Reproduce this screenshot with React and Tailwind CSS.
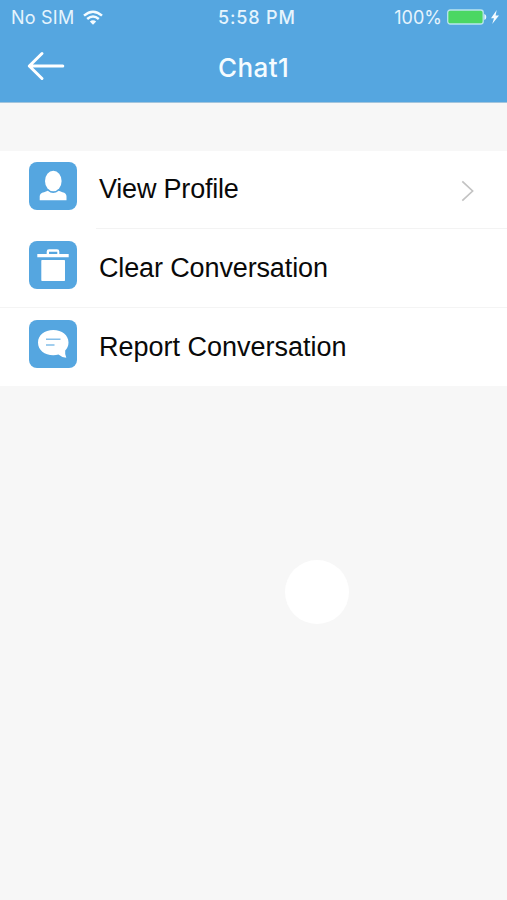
function WifiIcon() {
  return (
    <svg className="-mt-px ml-[9px] h-[16px] w-[20px]" viewBox="0 0 20 16" fill="none" stroke="#f4fbff" strokeWidth="2.5">
      <path d="M1 5.6Q10 -2.2 19 5.6" />
      <path d="M4.2 9Q10 4 15.8 9" />
      <path d="M6.8 11.6Q10 8.8 13.2 11.6L10 14.8Z" fill="#f4fbff" stroke="none" />
    </svg>
  );
}

function StatusBar() {
  return (
    <div className="grid h-[34px] grid-cols-[218px_78px_1fr] items-center pt-px font-['Inter','Liberation_Sans',sans-serif] text-[18px] leading-[34px] text-[#e6f4fd]">
      <div className="flex items-center whitespace-nowrap pl-[11px]">
        <span className="tracking-[0.22px]">No SIM</span>
        <WifiIcon />
      </div>
      <div className="whitespace-nowrap font-medium tracking-[0.85px]">5:58 PM</div>
      <div className="flex items-center justify-end whitespace-nowrap pr-[8px]">
        <span className="tracking-[0px]">100%</span>
        <svg className="-mt-[2px] ml-[5px] h-[16px] w-[52px]" viewBox="0 0 52 16">
          <rect x=".7" y="1" width="35.5" height="14" rx="2.5" fill="#4bd763" stroke="#b9e5ee" strokeWidth="1.3" />
          <path d="M37.3 5Q39.3 5.5 39.3 8T37.3 11Z" fill="#e9f7ff" />
          <path d="M49.7 1L44 9.2H47L45.2 15L52 6.6H48.6Z" fill="#f4fbff" />
        </svg>
      </div>
    </div>
  );
}

function ProfileIcon() {
  return (
    <svg className="size-12" viewBox="0 0 48 48" fill="#fff">
      <ellipse cx="24.3" cy="19" rx="8.3" ry="10.3" />
      <path d="M10.7 38.3V34.5Q10.7 31 15 30.2L18.8 28.8Q24 33.2 29.8 28.8L33.5 30.2Q37.5 31 37.5 34.5V38.3Z" />
    </svg>
  );
}

function TrashIcon() {
  return (
    <svg className="size-12" viewBox="0 0 48 48" fill="#fff">
      <path d="M8.3 13.1H17.7V10.5Q17.7 8.3 20 8.3H28Q30.3 8.3 30.3 10.5V13.1H39.7V16.2H8.3ZM20 13.1H28.3V10.7H20Z" fillRule="evenodd" />
      <rect x="12.3" y="19" width="23.7" height="21" rx=".7" />
    </svg>
  );
}

function ReportIcon() {
  return (
    <svg className="size-12" viewBox="0 0 48 48">
      <path d="M24.3 10C33 10 39.5 15 39.5 22.5Q39.5 27 36.2 30.4Q35.7 34.5 37.3 37.8Q32.5 37.3 29.5 34.5Q27 35.2 24.3 35.2C15.5 35.2 9 30 9 22.5S15.5 10 24.3 10Z" fill="#fff" />
      <path d="M17 19.3H31.5M17 25H25.5" stroke="#83bee9" strokeWidth="1.4" />
    </svg>
  );
}

function Row({ icon, label, height, pad, spacing, chevron }) {
  return (
    <div className={`flex items-start bg-white pl-[29px] ${height} ${pad}`}>
      <div className="size-12 shrink-0 overflow-hidden rounded-[8px] bg-[#55a6e0]">{icon}</div>
      <div className={`ml-[22px] whitespace-nowrap pt-[9px] text-[27px] leading-[36px] text-[#090909] ${spacing}`}>{label}</div>
      {chevron && (
        <svg className="mr-[33px] mt-[18px] ml-auto h-[22px] w-[13px]" viewBox="0 0 13 22" fill="none" stroke="#c3c3c3" strokeWidth="1.7">
          <path d="M1.3 1.3L11.6 11L1.3 20.7" />
        </svg>
      )}
    </div>
  );
}

export default function App() {
  return (
    <main className="h-[900px] w-[507px] overflow-hidden bg-[#f7f7f7] font-['Liberation_Sans',Arial,sans-serif]">
      <header className="h-[103px] border-b border-[#a3c5dd] bg-[#55a6e0]">
        <StatusBar />
        <div className="grid h-[68px] grid-cols-[218px_1fr] items-center">
          <svg className="mb-[4px] ml-[27px] h-[30px] w-[38px]" viewBox="0 0 38 30" fill="none" stroke="#fff" strokeWidth="3" strokeLinecap="round" strokeLinejoin="round">
            <path d="M15 2.5L2.3 15L15 27.5M2.3 15H35.8" />
          </svg>
          <h1 className="whitespace-nowrap font-['Inter','Liberation_Sans',sans-serif] text-[26px] font-medium leading-[36px] tracking-[0.45px] text-[#f5fcff]">Chat1</h1>
        </div>
      </header>

      <section className="mt-[48px]">
        <Row icon={<ProfileIcon />} label="View Profile" height="h-[77px]" pad="pt-[11px]" spacing="tracking-[-0.2px]" chevron />
        <div className="h-px bg-white pl-24">
          <div className="h-px bg-[#f3f3f3]" />
        </div>
        <Row icon={<TrashIcon />} label="Clear Conversation" height="h-[78px]" pad="pt-[12px]" spacing="tracking-[-0.13px]" />
        <div className="h-px bg-[#f4f4f4]" />
        <Row icon={<ReportIcon />} label="Report Conversation" height="h-[78px]" pad="pt-[12px]" spacing="tracking-[0px]" />
      </section>

      <div className="ml-[285px] mt-[174px] size-16 rounded-full bg-white" />
    </main>
  );
}
